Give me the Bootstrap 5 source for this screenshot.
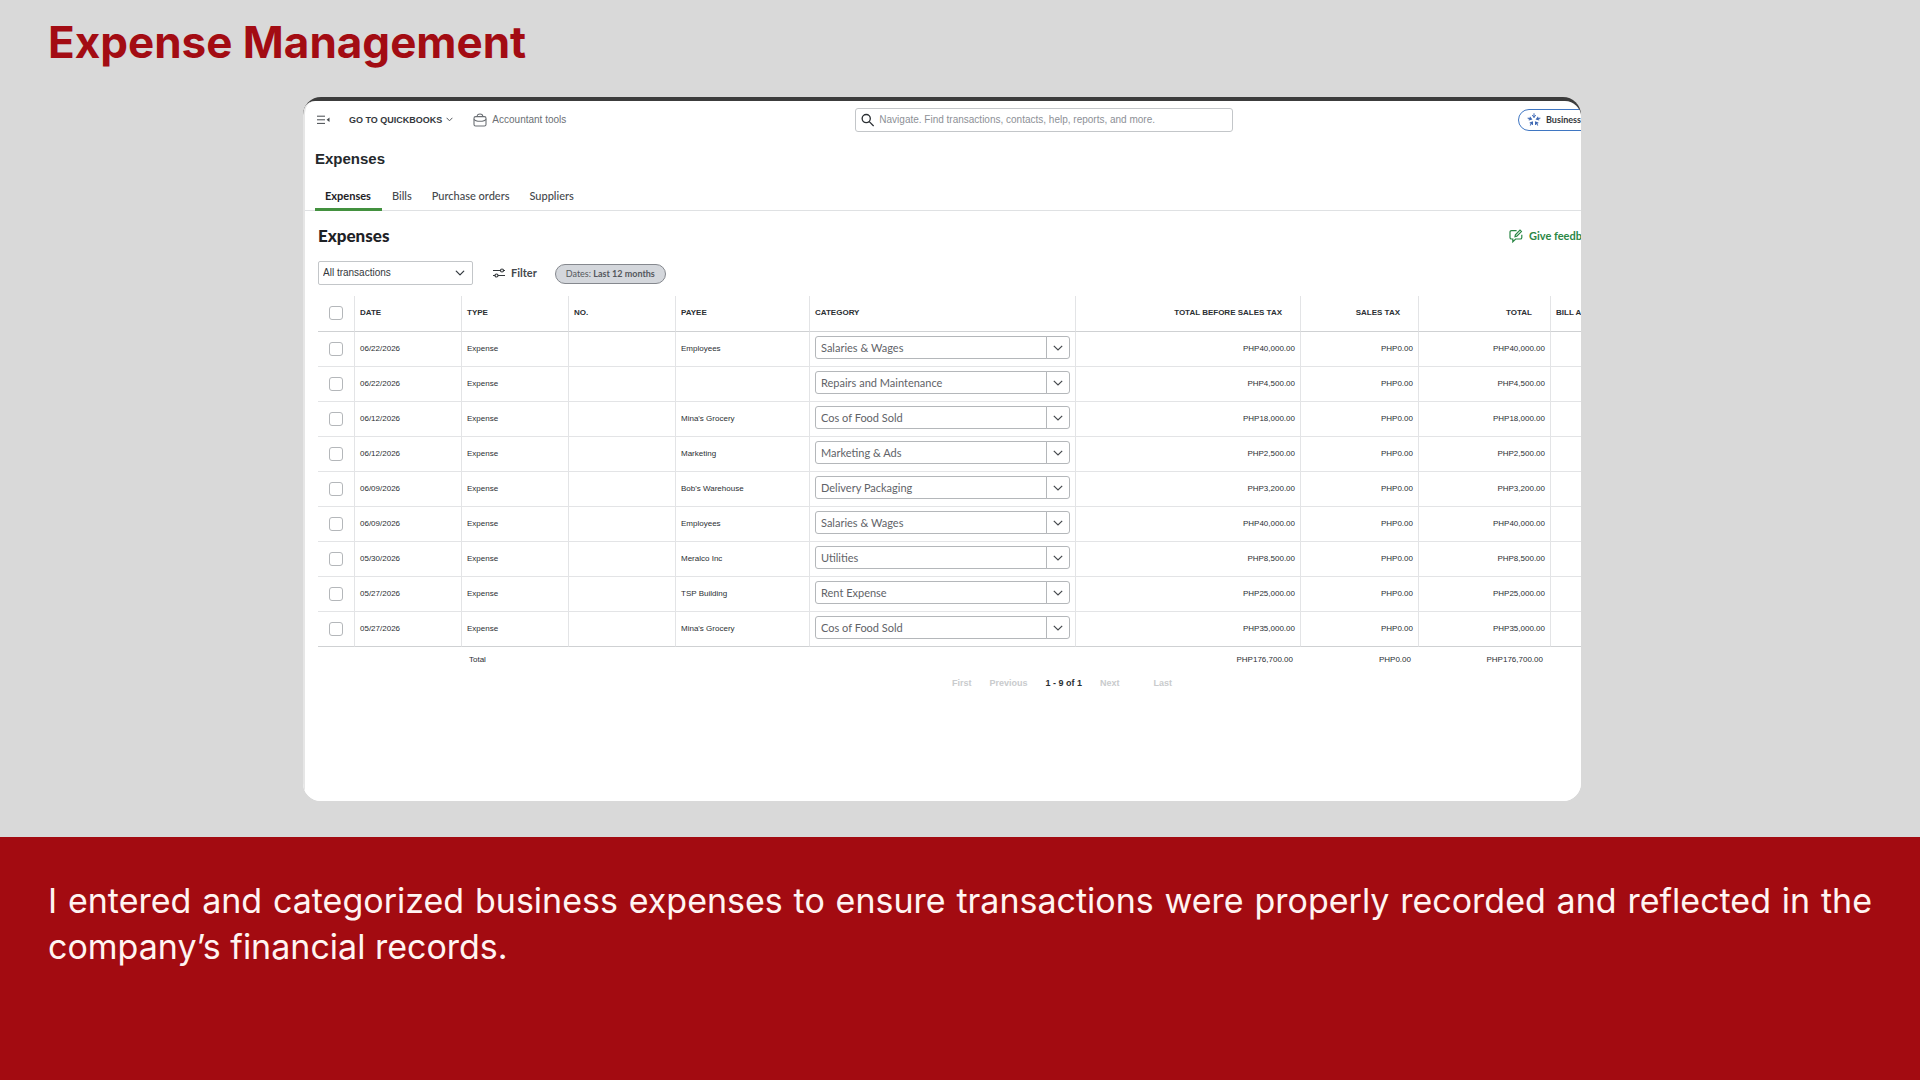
<!DOCTYPE html>
<html lang="en">
<head>
<meta charset="utf-8">
<meta name="viewport" content="width=device-width, initial-scale=1">
<title>Expense Management</title>
<link href="https://cdn.jsdelivr.net/npm/bootstrap@5.3.0/dist/css/bootstrap.min.css" rel="stylesheet">
<style>
  body { background: #d9d9d9; font-family: "Liberation Sans", Arial, sans-serif; color: #2b2f33; }
  .slide-title { font: 700 44px/56px Inter, sans-serif; color: #a30c13; padding: 14px 48px 27px; }
  .stage { padding: 0 339px 36px 303px; }
  .shot { background: linear-gradient(#3c3c3c 30px, #fff 30px); border-radius: 18px; overflow: hidden; padding-top: 4px; }
  .sheet { background: #fff; border-left: 2px solid #e6e6e6; border-radius: 12px 16px 0 0; overflow: hidden; padding-bottom: 112px; }
  .app { width: calc(100% + 60px); }
  .geo { font-family: Lato, sans-serif; font-variant-ligatures: none; }
  .topbar { display: grid; grid-template-columns: 538px 378px 1fr; height: 37px; padding-left: 12px; align-items: center; }
  .topbar .btn, .tools .btn { --bs-btn-padding-x: 0px; --bs-btn-padding-y: 0px; --bs-btn-border-width: 0px; line-height: 16px; }
  .btn-menu { width: 14px; margin-right: 18px; }
  .btn-qb { font-size: 9px; font-weight: 700; color: #34383c; margin-right: 20px; }
  .btn-qb svg { margin-left: 4px; }
  .btn-acc { font-size: 10px; color: #6b6f74; gap: 5px; }
  .searchbox { height: 24px; border: 1px solid #c3c6c9; border-radius: 3px; padding-left: 5px; gap: 5px; }
  .searchbox .form-control { font-size: 10px; line-height: 14px; padding: 0; border: 0; color: #34383c; min-height: 0; }
  .searchbox .form-control::placeholder { color: #8d9096; }
  .pill-biz { height: 22px; margin-left: 285px; width: 100px; padding: 0 8px; border: 1px solid #3f76c2; border-radius: 11px; background: #fff; font-size: 9px; font-weight: 700; color: #34383c; gap: 5px; white-space: nowrap; }
  .page-name { font-size: 15px; line-height: 20px; font-weight: 700; color: #24282c; margin: 11px 0 15px; padding-left: 10px; }
  .tabs { --bs-nav-link-padding-x: 10px; --bs-nav-link-padding-y: 0; border-bottom: 1px solid #dfe1e3; padding-left: 10px; height: 27px; }
  .tabs .nav-link { font-size: 11px; line-height: 23px; height: 27px; color: #45494d; font-weight: 500; }
  .tabs .nav-link.active { color: #1e2226; font-weight: 700; border-bottom: 3px solid #43913f; padding-right: 11px; }
  .section-head { margin-top: 15px; padding-left: 13px; }
  .section-name { font-size: 17px; line-height: 20px; font-weight: 900; color: #1e2226; margin: 0; }
  .btn-feedback { font-size: 11px; font-weight: 700; color: #2b8745; gap: 6px; width: 132px; white-space: nowrap; padding: 0; border: 0; line-height: 20px; }
  .tools { padding-left: 13px; margin: 15px 0 11px; height: 24px; }
  .tools .form-select { width: 155px; height: 24px; font-size: 10px; line-height: 14px; padding: 0 24px 0 4px; border: 1px solid #c3c6c9; border-radius: 2px; color: #34383c; background-size: 10px 10px; background-position: right 7px center; }
  .btn-filter { font-size: 11px; font-weight: 700; color: #45494d; margin: 0 18px 0 20px; gap: 6px; }
  .chip { height: 20px; margin-top: 2px; border: 1px solid #85888e; border-radius: 10px; background: #d4d7dc; font-size: 9px; line-height: 18px; padding: 0 8px; color: #54585d; width: 111px; white-space: nowrap; }
  .grid-wrap { padding-left: 13px; }
  .ledger { table-layout: fixed; width: 100%; font-size: 8px; line-height: 10px; border-collapse: separate; border-spacing: 0; color: #2b2f33; }
  .ledger th, .ledger td { padding: 0 5px; border-right: 1px solid #e3e4e6; border-bottom: 1px solid #e3e4e6; height: 35px; white-space: nowrap; vertical-align: middle; }
  .ledger th:last-child, .ledger tbody td:last-child { border-right: 0; }
  .ledger thead th { border-bottom-color: #cfd1d3; font-weight: 700; height: 36px; padding-bottom: 2px; }
  .ledger tbody tr:last-child td { border-bottom-color: #cfd1d3; }
  .ledger .num { text-align: right; }
  .ledger thead .num { padding-right: 18px; }
  .ledger tfoot td { border: 0; height: 25px; }
  .ledger tfoot td:nth-child(2) { padding-left: 7px; }
  .ledger tfoot .num { padding-right: 8px; }
  .ledger .form-check-input { width: 14px; height: 14px; border: 1px solid #b4b7ba; border-radius: 3px; margin: 0; display: block; }
  .ledger .tick { padding-left: 11px; }
  .combo { flex-wrap: nowrap; height: 23px; }
  .combo .form-control { font: 400 11px/21px Lato, sans-serif; padding: 0 5px; border: 1px solid #b4b7ba; border-radius: 3px 0 0 3px; color: #5f6368; min-height: 0; height: 23px; }
  .combo .btn { width: 24px; height: 23px; padding: 0; border: 1px solid #b4b7ba; border-radius: 0 3px 3px 0; display: flex; align-items: center; justify-content: center; }
  .ledger tbody .combo { margin-top: -3px; }
  .pager { font-size: 9px; line-height: 12px; font-weight: 700; padding-left: 647px; margin-top: 5px; }
  .pager a { color: #c9cbcd; text-decoration: none; margin-right: 18px; }
  .pager span { margin-right: 18px; }
  .pager a:last-child { margin-left: 16px; }
  .caption { background: #a30b11; color: #fff4f2; padding: 41px 48px; }
  .caption p { font: 400 34px/46px Inter, sans-serif; text-align: justify; margin: 0; }
</style>
</head>
<body>
<div class="d-flex flex-column min-vh-100">
  <h1 class="slide-title m-0">Expense Management</h1>
  <main class="stage">
    <div class="shot"><div class="sheet"><div class="app">
      <div class="topbar">
        <div class="d-flex align-items-center">
          <button class="btn btn-menu d-flex" type="button" aria-label="Menu"><svg width="14" height="10" viewBox="0 0 14 10" fill="none" stroke="#45494d"><path d="M0 1.200h8M0 4.800h8M0 8.400h8"/><path d="M12.500 2.600v4.400L9.600 4.800z" fill="#45494d" stroke="none"/></svg></button>
          <button class="btn btn-qb d-flex align-items-center" type="button">GO TO QUICKBOOKS <svg width="7" height="5" viewBox="0 0 7 5" fill="none" stroke="#55595e"><path d="M.6.8l2.900 3 2.900-3"/></svg></button>
          <button class="btn btn-acc d-flex align-items-center" type="button"><svg width="14" height="14" viewBox="0 0 14 14" fill="none" stroke="#6b6f74" stroke-width="1.100"><rect x="1" y="3.600" width="12" height="9.400" rx="1.600"/><path d="M4.200 3.400C4.200 1.700 5 1 7 1s2.800.7 2.800 2.400M1 6.200c1 1.900 3 2.100 6 2.100s5-.2 6-2.100"/></svg>Accountant tools</button>
        </div>
        <label class="searchbox d-flex align-items-center"><svg width="14" height="14" viewBox="0 0 14 14" fill="none" stroke="#2b2f33" stroke-width="1.400"><circle cx="5.500" cy="5.500" r="4.300"/><path d="M8.700 8.700l4.600 4.600"/></svg><input class="form-control shadow-none" type="text" aria-label="Search" placeholder="Navigate. Find transactions, contacts, help, reports, and more."></label>
        <button class="pill-biz geo d-flex align-items-center" type="button"><svg class="flex-shrink-0" width="14" height="14" viewBox="-7 -7 14 14" fill="none" stroke="#3f69b4" stroke-width="1"><g id="ray"><path d="M0-6.700v4.200M-1.700-5L0-2.500 1.700-5"/></g><use href="#ray" transform="rotate(72)"/><use href="#ray" transform="rotate(144)"/><use href="#ray" transform="rotate(216)"/><use href="#ray" transform="rotate(288)"/></svg>Business</button>
      </div>
      <h2 class="page-name">Expenses</h2>
      <nav class="nav tabs geo">
        <a class="nav-link active" href="#">Expenses</a>
        <a class="nav-link" href="#">Bills</a>
        <a class="nav-link" href="#">Purchase orders</a>
        <a class="nav-link" href="#">Suppliers</a>
      </nav>
      <div class="section-head d-flex justify-content-between align-items-center geo">
        <h3 class="section-name">Expenses</h3>
        <button class="btn btn-feedback d-flex align-items-center" type="button"><svg width="14" height="14" viewBox="0 0 14 14" fill="none" stroke="#2b8745" stroke-width="1.200"><path d="M7.600 1.600H2.600C1.600 1.600 1 2.200 1 3.200v5.200c0 1 .6 1.600 1.600 1.600h1.200v2.800L6.600 10h4.600c1 0 1.600-.6 1.600-1.600V5.800"/><path d="M6 7.600l.4-1.800L11 1.200l1.400 1.400-4.600 4.600z"/></svg>Give feedback</button>
      </div>
      <div class="tools d-flex align-items-center">
        <select class="form-select" aria-label="Transaction type"><option>All transactions</option></select>
        <button class="btn btn-filter geo d-flex align-items-center" type="button"><svg width="12" height="10" viewBox="0 0 12 10" fill="none" stroke="#34383c" stroke-width="1.200"><path d="M0 2.500h7.500M10.500 2.500H12M0 7.500h2M5 7.500h7"/><circle cx="9" cy="2.500" r="1.500"/><circle cx="3.500" cy="7.500" r="1.500"/></svg>Filter</button>
        <button class="chip geo" type="button">Dates: <b>Last 12 months</b></button>
      </div>
      <div class="grid-wrap">
        <table class="ledger">
          <colgroup><col style="width:37px"><col style="width:107px"><col style="width:107px"><col style="width:107px"><col style="width:134px"><col style="width:266px"><col><col style="width:118px"><col style="width:132px"><col style="width:90px"></colgroup>
          <thead><tr><th class="tick"><input class="form-check-input" type="checkbox" aria-label="Select all"></th><th>DATE</th><th>TYPE</th><th>NO.</th><th>PAYEE</th><th>CATEGORY</th><th class="num">TOTAL BEFORE SALES TAX</th><th class="num">SALES TAX</th><th class="num">TOTAL</th><th>BILL AMOUNT</th></tr></thead>
          <tbody id="rows"></tbody>
          <tfoot><tr><td colspan="2"></td><td colspan="4">Total</td><td class="num">PHP176,700.00</td><td class="num">PHP0.00</td><td class="num">PHP176,700.00</td><td></td></tr></tfoot>
        </table>
      </div>
      <nav class="pager d-flex" aria-label="Pages">
        <a href="#">First</a><a href="#">Previous</a><span>1 - 9 of 1</span><a href="#">Next</a><a href="#">Last</a>
      </nav>
    </div></div></div>
  </main>
  <footer class="caption flex-grow-1">
    <p>I entered and categorized business expenses to ensure transactions were properly recorded and reflected in the company’s financial records.</p>
  </footer>
</div>
<script src="https://cdn.jsdelivr.net/npm/bootstrap@5.3.0/dist/js/bootstrap.bundle.min.js"></script>
<script>
  const entries = [
    ["06/22/2026", "Employees", "Salaries & Wages", "40,000.00"],
    ["06/22/2026", "", "Repairs and Maintenance", "4,500.00"],
    ["06/12/2026", "Mina's Grocery", "Cos of Food Sold", "18,000.00"],
    ["06/12/2026", "Marketing", "Marketing & Ads", "2,500.00"],
    ["06/09/2026", "Bob's Warehouse", "Delivery Packaging", "3,200.00"],
    ["06/09/2026", "Employees", "Salaries & Wages", "40,000.00"],
    ["05/30/2026", "Meralco Inc", "Utilities", "8,500.00"],
    ["05/27/2026", "TSP Building", "Rent Expense", "25,000.00"],
    ["05/27/2026", "Mina's Grocery", "Cos of Food Sold", "35,000.00"]
  ];
  document.getElementById("rows").innerHTML = entries.map(([date, payee, category, amount]) => `
    <tr>
      <td class="tick"><input class="form-check-input" type="checkbox" aria-label="Select row"></td>
      <td>${date}</td><td>Expense</td><td></td><td>${payee}</td>
      <td><div class="input-group combo"><input class="form-control" type="text" aria-label="Category" value="${category.replace("&", "&amp;")}"><button class="btn" type="button" aria-label="Open categories"><svg width="10" height="6" viewBox="0 0 10 6" fill="none" stroke="#45494d" stroke-width="1.200"><path d="M.8.8L5 5 9.200.8"/></svg></button></div></td>
      <td class="num">PHP${amount}</td><td class="num">PHP0.00</td><td class="num">PHP${amount}</td><td></td>
    </tr>`).join("");
</script>
</body>
</html>
